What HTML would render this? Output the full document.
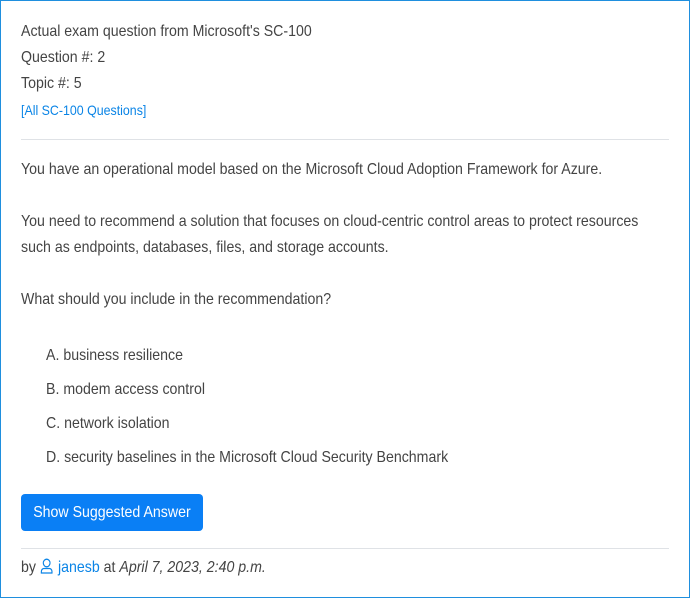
<!DOCTYPE html><html><head><style>
html,body{margin:0;padding:0;}
body{width:690px;height:598px;box-sizing:border-box;border:1px solid #1f8fde;background:#fff;font-family:"Liberation Sans",sans-serif;font-size:16px;color:#444;position:relative;overflow:hidden}
.t{position:absolute;left:20px;white-space:nowrap;line-height:20px;transform:scaleX(0.885);transform-origin:0 0}
a{color:#0a84e6;text-decoration:none}
.hr{position:absolute;left:20px;width:648px;height:1px;background:#dfe2e6}
.btn{position:absolute;left:20px;top:493px;width:182px;height:37px;background:#0a7ff5;border-radius:4px;color:#fff;font-size:16px;line-height:37px;text-align:center}
.btn span{display:inline-block;transform:scaleX(0.885)}
</style></head><body>
<div class="t" style="top:21px">Actual exam question from Microsoft's SC-100</div>
<div class="t" style="top:47px">Question #: 2</div>
<div class="t" style="top:73px">Topic #: 5</div>
<div class="t" style="top:99px;font-size:14px"><a>[All SC-100 Questions]</a></div>
<div class="hr" style="top:138px"></div>
<div class="t" style="top:159px">You have an operational model based on the Microsoft Cloud Adoption Framework for Azure.</div>
<div class="t" style="top:211px">You need to recommend a solution that focuses on cloud-centric control areas to protect resources</div>
<div class="t" style="top:237px">such as endpoints, databases, files, and storage accounts.</div>
<div class="t" style="top:289px">What should you include in the recommendation?</div>
<div class="t" style="top:345px;left:45px">A. business resilience</div>
<div class="t" style="top:379px;left:45px">B. modem access control</div>
<div class="t" style="top:413px;left:45px">C. network isolation</div>
<div class="t" style="top:447px;left:45px">D. security baselines in the Microsoft Cloud Security Benchmark</div>
<div class="btn"><span>Show Suggested Answer</span></div>
<div class="hr" style="top:547px"></div>
<div class="t" style="top:557px">by <svg width="16" height="16" viewBox="0 0 15 16" style="vertical-align:-2px"><circle cx="7.5" cy="5" r="3.8" fill="none" stroke="#0a84e6" stroke-width="1.3"/><path d="M1.5 15v-1.5a3 3 0 0 1 3-3h6a3 3 0 0 1 3 3V15z" fill="none" stroke="#0a84e6" stroke-width="1.3"/></svg> <a>janesb</a> at <i>April 7, 2023, 2:40 p.m.</i></div>
</body></html>
